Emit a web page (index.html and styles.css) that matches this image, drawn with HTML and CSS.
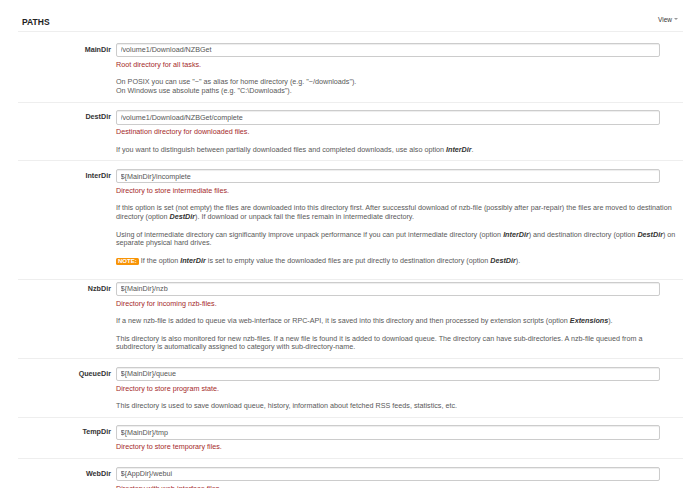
FILE: index.html
```html
<!DOCTYPE html>
<html lang="en">
<head>
<meta charset="utf-8">
<title>Settings - Paths</title>
<link rel="stylesheet" href="styles.css">
</head>
<body>
<div class="section">
  <div class="section-head">
    <h3 class="section-title">PATHS</h3>
    <div class="view">View <span class="caret"></span></div>
  </div>

  <div class="option first">
    <label class="option-name">MainDir</label>
    <div class="controls">
      <input class="field" type="text" value="/volume1/Download/NZBGet">
      <p class="option-title">Root directory for all tasks.</p>
      <p class="help">On POSIX you can use "~" as alias for home directory (e.g. "~/downloads").<br>On Windows use absolute paths (e.g. "C:\Downloads").</p>
    </div>
  </div>

  <div class="option">
    <label class="option-name">DestDir</label>
    <div class="controls">
      <input class="field" type="text" value="/volume1/Download/NZBGet/complete">
      <p class="option-title">Destination directory for downloaded files.</p>
      <p class="help">If you want to distinguish between partially downloaded files and completed downloads, use also option <b><i>InterDir</i></b>.</p>
    </div>
  </div>

  <div class="option">
    <label class="option-name">InterDir</label>
    <div class="controls">
      <input class="field" type="text" value="${MainDir}/incomplete">
      <p class="option-title">Directory to store intermediate files.</p>
      <p class="help">If this option is set (not empty) the files are downloaded into this directory first. After successful download of nzb-file (possibly after par-repair) the files are moved to destination directory (option <b><i>DestDir</i></b>). If download or unpack fail the files remain in intermediate directory.</p>
      <p class="help">Using of intermediate directory can significantly improve unpack performance if you can put intermediate directory (option <b><i>InterDir</i></b>) and destination directory (option <b><i>DestDir</i></b>) on separate physical hard drives.</p>
      <p class="help note-line"><span class="badge">NOTE:</span> If the option <b><i>InterDir</i></b> is set to empty value the downloaded files are put directly to destination directory (option <b><i>DestDir</i></b>).</p>
    </div>
  </div>

  <div class="option tight">
    <label class="option-name">NzbDir</label>
    <div class="controls">
      <input class="field" type="text" value="${MainDir}/nzb">
      <p class="option-title">Directory for incoming nzb-files.</p>
      <p class="help">If a new nzb-file is added to queue via web-interface or RPC-API, it is saved into this directory and then processed by extension scripts (option <b><i>Extensions</i></b>).</p>
      <p class="help">This directory is also monitored for new nzb-files. If a new file is found it is added to download queue. The directory can have sub-directories. A nzb-file queued from a subdirectory is automatically assigned to category with sub-directory-name.</p>
    </div>
  </div>

  <div class="option">
    <label class="option-name">QueueDir</label>
    <div class="controls">
      <input class="field" type="text" value="${MainDir}/queue">
      <p class="option-title">Directory to store program state.</p>
      <p class="help">This directory is used to save download queue, history, information about fetched RSS feeds, statistics, etc.</p>
    </div>
  </div>

  <div class="option">
    <label class="option-name">TempDir</label>
    <div class="controls">
      <input class="field" type="text" value="${MainDir}/tmp">
      <p class="option-title">Directory to store temporary files.</p>
    </div>
  </div>

  <div class="option">
    <label class="option-name">WebDir</label>
    <div class="controls">
      <input class="field" type="text" value="${AppDir}/webui">
      <p class="option-title">Directory with web-interface files.</p>
    </div>
  </div>
</div>
</body>
</html>
```
FILE: styles.css
```css
* {
  box-sizing: border-box;
}

html,
body {
  margin: 0;
  background: #fff;
}

body {
  font-family: "Liberation Sans", Arial, Helvetica, sans-serif;
  font-size: 7.2px;
  line-height: 8.7px;
  color: #333;
}

.section {
  margin-left: 18px;
  width: 665px;
}

/* section header: title on the left, view menu on the right */
.section-head {
  display: flex;
  justify-content: space-between;
  align-items: flex-start;
  height: 32px;
  border-bottom: 1px solid #eee;
}

.section-title {
  margin: 17px 0 0 4px;
  font-size: 8.5px;
  line-height: 10px;
  font-weight: bold;
  color: #222;
}

.view {
  display: flex;
  align-items: center;
  gap: 2px;
  margin: 14.5px 5px 0 0;
  font-size: 6.5px;
  line-height: 9px;
  color: #333;
}

.caret {
  width: 0;
  height: 0;
  border-left: 2px solid transparent;
  border-right: 2px solid transparent;
  border-top: 2px solid #999;
}

/* one option row: name column + controls column */
.option {
  display: grid;
  grid-template-columns: 98px 561px;
  padding: 7.5px 0 6px;
  border-bottom: 1px solid #eee;
}

.option.first {
  padding-top: 10.5px;
}

.option.tight {
  padding-top: 2px;
}

.option-name {
  text-align: right;
  padding-right: 5px;
  font-weight: bold;
  line-height: 14.6px;
  color: #333;
}

.field {
  display: block;
  width: 544px;
  height: 14.6px;
  margin: 0;
  padding: 0 3.5px;
  border: 1px solid #ccc;
  border-radius: 2px;
  box-shadow: inset 0 1px 1px rgba(0, 0, 0, 0.075);
  font: inherit;
  color: #555;
  background: #fff;
}

.option-title {
  margin: 3.5px 0 0;
  color: #a52a2a;
}

.help {
  margin: 8.8px 0 0;
  color: #595959;
}

.help b {
  color: #333;
}

.note-line {
  margin-bottom: 7px;
}

.badge {
  display: inline-block;
  padding: 0 2px;
  border-radius: 1.5px;
  background: #f89406;
  color: #fff;
  font-weight: bold;
  font-size: 6px;
  line-height: 7px;
}
```
